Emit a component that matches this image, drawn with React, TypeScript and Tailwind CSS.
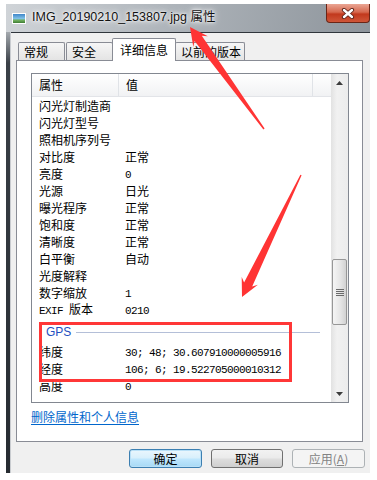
const rows: [string, string?][] = [
  ["闪光灯制造商"],
  ["闪光灯型号"],
  ["照相机序列号"],
  ["对比度", "正常"],
  ["亮度", "0"],
  ["光源", "日光"],
  ["曝光程序", "正常"],
  ["饱和度", "正常"],
  ["清晰度", "正常"],
  ["白平衡", "自动"],
  ["光度解释"],
  ["数字缩放", "1"],
  ["EXIF 版本", "0210"],
];

const gpsRows: [string, string][] = [
  ["纬度", "30; 48; 30.607910000005916"],
  ["经度", "106; 6; 19.522705000010312"],
  ["高度", "0"],
];

// ascii runs get the 6px-wide mono look of the old bitmap font
function Mixed({ text }: { text: string }) {
  const parts = text.split(/([\x20-\x7e]+)/).filter(Boolean);
  return (
    <>
      {parts.map((p, i) =>
        /^[\x20-\x7e]+$/.test(p) ? (
          <span
            key={i}
            className="font-['Liberation_Mono',monospace] text-[11px] tracking-[-0.6px] whitespace-pre"
          >
            {p}
          </span>
        ) : (
          <span key={i}>{p}</span>
        )
      )}
    </>
  );
}

function Row({ label, value }: { label: string; value?: string }) {
  return (
    <div className="flex h-[17px] shrink-0 items-center leading-[17px]">
      <div className="w-[93px] pl-[7px] whitespace-nowrap">
        <Mixed text={label} />
      </div>
      <div className="whitespace-nowrap">{value && <Mixed text={value} />}</div>
    </div>
  );
}

function Tab({ label, selected, className }: { label: string; selected?: boolean; className: string }) {
  if (selected) {
    return (
      <div
        className={
          "relative z-10 -mb-px h-[23px] rounded-t-[2px] border border-b-0 border-[#898c95] bg-white pl-[7px] leading-[21px] " +
          className
        }
      >
        {label}
      </div>
    );
  }
  return (
    <div
      className={
        "h-[18px] rounded-t-[2px] border border-b-0 border-[#898c95] bg-[linear-gradient(180deg,#f6f6f6,#e4e4e4)] pl-[5px] leading-[17px] " +
        className
      }
    >
      {label}
    </div>
  );
}

export default function App() {
  return (
    <div className="relative h-[480px] w-[377px] overflow-hidden bg-white pt-[4px] font-['Noto_Sans_CJK_SC',sans-serif] text-[12px] text-black">
      <div className="ml-[6px] flex h-[469px] w-[364px] flex-col">
        {/* title bar */}
        <div className="flex h-[28px] items-start bg-[linear-gradient(100deg,#d0d4d8_0%,#aeb4ba_45%,#8e959c_100%)]">
          <div className="ml-[6px] mt-[9px] h-[11px] w-[14px] border border-white bg-[linear-gradient(180deg,#3f86c9_0%,#7fc0e6_50%,#6fae5c_70%,#3d7c34_100%)]" />
          <div className="ml-[6px] flex h-[26px] items-center font-['Liberation_Sans','Noto_Sans_CJK_SC',sans-serif] text-[12.5px] text-[#111] [text-shadow:0_0_8px_#fff,0_0_4px_#fff,0_0_2px_#fff]">
            IMG_20190210_153807.jpg 属性
          </div>
          <div className="ml-auto flex h-[19px] w-[44px] items-center justify-center rounded-b-[4px] border border-t-0 border-[#6b2516] bg-[linear-gradient(180deg,#eaa594_0%,#d6694f_45%,#c2391d_56%,#cf5639_100%)]">
            <svg width="14" height="11" viewBox="0 0 14 11">
              <path d="M3 2 L11 9 M11 2 L3 9" stroke="#5a2218" strokeWidth="4.2" strokeLinecap="round" />
              <path d="M3 2 L11 9 M11 2 L3 9" stroke="#ffffff" strokeWidth="2.4" strokeLinecap="round" />
            </svg>
          </div>
        </div>

        <div className="flex flex-1">
          {/* left frame */}
          <div className="w-[5px] border-r border-[#c9ccd0] bg-[linear-gradient(180deg,#a4a9ae_0%,#3a4047_7%,#262b31_100%)]" />

          {/* client area */}
          <div className="flex flex-1 flex-col border-t border-[#30363c] bg-[#f0f0f0] pl-[5px] pt-[5px]">
            <div className="flex h-[22px] items-end">
              <Tab label="常规" className="ml-[2px] w-[47px]" />
              <Tab label="安全" className="ml-[1px] w-[47px]" />
              <Tab label="详细信息" selected className="-ml-px w-[64px]" />
              <Tab label="以前的版本" className="-ml-px w-[70px]" />
            </div>

            <div className="flex h-[382px] w-[347px] flex-col border border-[#898c95] bg-white">
              {/* property list */}
              <div className="ml-[14px] mt-[12px] flex h-[330px] w-[318px] border border-[#828790] bg-white">
                <div className="flex w-[299px] flex-col overflow-hidden">
                  <div className="flex h-[23px] shrink-0 items-center border-b border-[#e2e4e8] bg-[linear-gradient(180deg,#ffffff,#f1f2f4)]">
                    <div className="h-full w-[87px] border-r border-[#e0e3e7] pl-[7px] leading-[22px]">属性</div>
                    <div className="h-full w-[194px] border-r border-[#e0e3e7] pl-[7px] leading-[22px]">值</div>
                    <div className="flex-1" />
                  </div>
                  {rows.map(([l, v], i) => (
                    <Row key={i} label={l} value={v} />
                  ))}
                  <div className="flex h-[25px] shrink-0 items-center pl-[14px] pt-[3px]">
                    <span className="font-['Liberation_Sans',sans-serif] text-[12px] text-[#1f4fbf]">GPS</span>
                    <div className="ml-[5px] mr-[11px] h-px flex-1 bg-[#b4bfd8]" />
                  </div>
                  {gpsRows.map(([l, v], i) => (
                    <Row key={i} label={l} value={v} />
                  ))}
                </div>

                {/* scrollbar */}
                <div className="flex w-[17px] flex-col bg-[linear-gradient(90deg,#e2e2e2,#f1f1f1_35%,#ececec)]">
                  <div className="flex h-[17px] items-center justify-center">
                    <svg width="7" height="4" viewBox="0 0 7 4">
                      <path d="M3.5 0 L7 4 L0 4 Z" fill="#3c3c3c" />
                    </svg>
                  </div>
                  <div className="flex-1">
                    <div className="mx-[1px] mt-[168px] flex h-[66px] flex-col items-center justify-center gap-[1px] rounded-[2px] border border-[#979797] bg-[linear-gradient(90deg,#f5f5f5,#e4e4e4_60%,#d2d2d2)]">
                      <div className="h-px w-[8px] bg-[#6a6a6a]" />
                      <div className="h-px w-[8px] bg-[#6a6a6a]" />
                      <div className="h-px w-[8px] bg-[#6a6a6a]" />
                      <div className="h-px w-[8px] bg-[#6a6a6a]" />
                    </div>
                  </div>
                  <div className="flex h-[17px] items-center justify-center">
                    <svg width="7" height="4" viewBox="0 0 7 4">
                      <path d="M0 0 L7 0 L3.5 4 Z" fill="#3c3c3c" />
                    </svg>
                  </div>
                </div>
              </div>

              <div className="ml-[14px] mt-[7px] leading-[14px]">
                <span className="text-[#0066cc] underline underline-offset-2">删除属性和个人信息</span>
              </div>
            </div>

            {/* buttons */}
            <div className="mt-[7px] flex justify-end gap-[9px] pr-[5px]">
              <div className="flex h-[19px] w-[73px] items-center justify-center rounded-[3px] border border-[#3c7fb1] bg-[linear-gradient(180deg,#eaf6fd_0%,#d9f0fc_45%,#bee6fd_55%,#a7d9f5_100%)] shadow-[inset_0_0_0_1px_#b9e0f7]">
                确定
              </div>
              <div className="flex h-[19px] w-[72px] items-center justify-center rounded-[3px] border border-[#707070] bg-[linear-gradient(180deg,#f2f2f2_0%,#ebebeb_45%,#dddddd_55%,#cfcfcf_100%)]">
                取消
              </div>
              <div className="flex h-[19px] w-[73px] items-center justify-center rounded-[3px] border border-[#adb2b5] bg-[#f4f4f4] text-[#838383]">
                应用(<span className="underline">A</span>)
              </div>
            </div>
          </div>
        </div>
      </div>

      {/* annotations drawn over the screenshot */}
      <svg className="pointer-events-none absolute left-0 top-0" width="377" height="480" viewBox="0 0 377 480">
        <rect x="40.5" y="323.5" width="250" height="57" fill="none" stroke="#ff3737" strokeWidth="3" />
        <polygon
          points="190,27 207.9,36.3 201.8,35.7 264.6,128.6 263.4,129.4 194.6,40.9 193.3,46.9"
          fill="#ff3434"
        />
        <polygon
          points="242,297 257.9,284.7 252.2,286.4 301.6,175.3 300.4,174.7 244.1,282.4 241.7,276.9"
          fill="#ff3434"
        />
      </svg>
    </div>
  );
}
